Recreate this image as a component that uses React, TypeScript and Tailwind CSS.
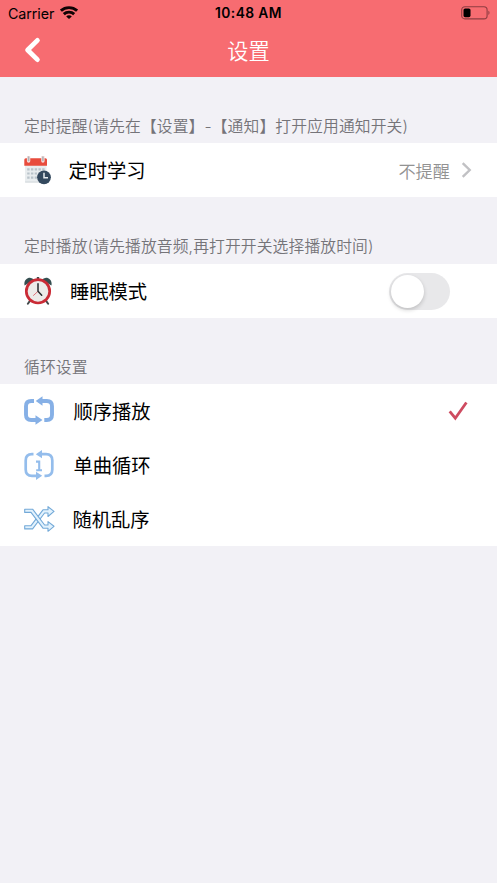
import type { ReactNode } from "react";

const font = "font-['Inter','Noto_Sans_CJK_SC',sans-serif]";

function StatusBar() {
  return (
    <div className="h-[25px] grid grid-cols-3 items-center text-black">
      <div className="flex items-center gap-[6px] pl-[8px]">
        <span className="text-[14.3px] leading-[25px] tracking-[-0.1px]">Carrier</span>
        <svg className="w-[18px] h-[13px] -mt-[2px]" viewBox="0 0 18 13" fill="none" stroke="#100304" strokeWidth="2.9">
          <path d="M.9 4.7C5.4.6 12.6.6 17.1 4.7" />
          <path d="M3.8 8.1C6.7 5.4 11.3 5.4 14.2 8.1" />
          <path d="M9 13 6.2 10.4C7.8 9 10.2 9 11.8 10.4Z" fill="#100304" stroke="none" />
        </svg>
      </div>
      <span className="text-center text-[13.8px] leading-[25px] pt-px font-semibold tracking-[0.4px] whitespace-nowrap">10:48 AM</span>
      <div className="flex justify-end pr-[7px]">
        <svg className="w-[29px] h-[14px]" viewBox="0 0 29 14">
          <rect x=".7" y=".7" width="25.4" height="12.2" rx="3.2" fill="none" stroke="#8f3d42" strokeWidth="1.1" />
          <rect x="2.5" y="2.5" width="7" height="8.7" rx="1.6" fill="#000" />
          <path d="M27.4 4.7c1.5.6 1.5 3.6 0 4.2z" fill="#8f3d42" />
        </svg>
      </div>
    </div>
  );
}

function CalendarIcon() {
  return (
    <svg className="w-[28px] h-[30px] mt-px" viewBox="0 0 28 30">
      <path d="M1 9h21.5v17.5H2.5A1.5 1.5 0 0 1 1 25z" fill="#e9edef" />
      <path d="M.3 3.8A1.5 1.5 0 0 1 1.8 2.3h19.7A1.5 1.5 0 0 1 23 3.8v6H.3z" fill="#e84c3d" />
      <path d="M4.6 1v4M18.9 1v4" stroke="#f7dcda" strokeWidth="3.4" strokeLinecap="round" />
      <path d="M4.6 1v3.4M18.9 1v3.4" stroke="#aeb4b8" strokeWidth="1.6" strokeLinecap="round" />
      <path d="M3.2 13.4h17.5M3.2 17.5h17.5M3.2 21.6h12" stroke="#b9c3ca" strokeWidth="2.2" strokeDasharray="2.4 1.35" />
      <path d="M1 26h15" stroke="#d0d6da" />
      <circle cx="20" cy="21.3" r="6.9" fill="#34495e" />
      <path d="M20 16.8v5h4" fill="none" stroke="#e8edf0" strokeWidth="1.5" />
    </svg>
  );
}

function AlarmIcon() {
  return (
    <svg className="w-[28px] h-[28px]" viewBox="0 0 28 28">
      <path d="m6.5 23-2.6 3.7M21.5 23l2.6 3.7" stroke="#42494b" strokeWidth="2" strokeLinecap="round" />
      <path d="M.6 8.5C-.6 4.2 2.8.5 6.5.9c1.8.1 3 1 3.7 1.8zM27.4 8.5C28.6 4.2 25.2.5 21.5.9c-1.8.1-3 1-3.7 1.8z" fill="#344e50" />
      <path d="M14 .6v2.6" stroke="#42494b" strokeWidth="2.4" strokeLinecap="round" />
      <circle cx="14" cy="14.3" r="11.7" fill="#ecebe9" stroke="#ca2b36" strokeWidth="2.7" />
      <path d="m14 14.3-4.8 4.4" stroke="#e0737a" />
      <path d="M14 6.7v7.6l3.7 3.9" fill="none" stroke="#252b2e" strokeWidth="1.5" strokeLinecap="round" />
    </svg>
  );
}

function LoopIcon() {
  return (
    <svg className="w-[30px] h-[30px]" viewBox="0 0 30 30" fill="none" stroke="#86b0e6" strokeWidth="3.9">
      <path d="M10 5H7.2Q2 5 2 10.2V18.8Q2 24 7.2 24H13" />
      <path d="M17 5H22.8Q28 5 28 10.2V18.8Q28 24 22.8 24H20.3" />
      <path d="M11.7 5 18.5.2v9.6zM18.5 24l-7-4.8v9.6z" fill="#86b0e6" stroke="none" />
    </svg>
  );
}

function LoopOneIcon() {
  return (
    <svg className="w-[30px] h-[30px]" viewBox="0 0 30 30" fill="none" stroke="#94bdec" strokeWidth="2.7">
      <path d="M9.5 4.2H8Q1.7 4.2 1.7 10.5V19.5Q1.7 25.8 8 25.8H13" />
      <path d="M17 4.2H22Q28.3 4.2 28.3 10.5V19.5Q28.3 25.8 22 25.8H20.5" />
      <path d="M11.8 4.2 18 .1v8.2zM18.2 25.8 12 21.7v8.2z" fill="#94bdec" stroke="none" />
      <path d="M12 11.6H15.2V20.2M12.2 20.2H18" strokeWidth="2.1" />
    </svg>
  );
}

function ShuffleIcon() {
  return (
    <svg className="w-[31px] h-[26px]" viewBox="0 0 31 26" fill="#e2f2fd" stroke="#73a9d8" strokeWidth="1.1" strokeLinejoin="round">
      <path d="M.7 19.7V22.9H8.6L20.6 7H24v3.5l6-5.1L24 .7v3.1h-5L7 19.7z" />
      <path d="M.7 3.2V6.4H7l12 15.8h5v3.1l6-5L24 15.6V19h-3.4L8.6 3.2z" />
    </svg>
  );
}

function SectionTitle({ children }: { children: ReactNode }) {
  return (
    <h2 className="pl-[24px] pt-[38px] h-full text-[15.8px] leading-[24px] tracking-[0.1px] font-[350] text-[#757479] whitespace-nowrap">
      {children}
    </h2>
  );
}

type RowProps = { icon: ReactNode; label: string; labelClass: string; children?: ReactNode };

function Row({ icon, label, labelClass, children }: RowProps) {
  return (
    <div className="h-[54px] bg-white flex items-center pl-[24px]">
      <div className="w-[31px] shrink-0 flex items-center">{icon}</div>
      <span className={`text-[19.3px] leading-[28px] pt-[2px] text-black ${labelClass}`}>{label}</span>
      {children}
    </div>
  );
}

export default function App() {
  return (
    <div className={`w-full min-h-[883px] bg-[#f2f1f6] ${font}`}>
      <header className="h-[77px] bg-[#f76c71]">
        <StatusBar />
        <div className="h-[50px] grid grid-cols-3 items-center">
          <button className="pl-[24px]" aria-label="返回">
            <svg className="w-[17px] h-[26px]" viewBox="0 0 17 26" fill="none" stroke="#fff" strokeWidth="4.8" strokeLinecap="round" strokeLinejoin="round">
              <path d="M13.4 3.4 3.6 13l9.8 9.6" />
            </svg>
          </button>
          <h1 className="pt-px text-center text-[21.2px] leading-[32px] font-[350] text-white">设置</h1>
        </div>
      </header>

      <section>
        <div className="h-[66px]">
          <SectionTitle>定时提醒(请先在【设置】-【通知】打开应用通知开关)</SectionTitle>
        </div>
        <Row icon={<CalendarIcon />} label="定时学习" labelClass="ml-[13.5px]">
          <span className="ml-auto pt-[3px] text-[17.2px] leading-[26px] font-[350] text-[#929292]">不提醒</span>
          <svg className="ml-[11px] mr-[25px] w-[11px] h-[16px]" viewBox="0 0 11 16" fill="none" stroke="#c1c1c4" strokeWidth="2.4">
            <path d="m1.7 1.2 7 6.8-7 6.8" />
          </svg>
        </Row>
      </section>

      <section>
        <div className="h-[67px]">
          <SectionTitle>定时播放(请先播放音频,再打开开关选择播放时间)</SectionTitle>
        </div>
        <Row icon={<AlarmIcon />} label="睡眠模式" labelClass="ml-[15px]">
          <button role="switch" aria-checked="false" className="ml-auto mr-[47px] mt-px w-[61px] h-[37px] rounded-full bg-[#e8e8ea] p-[2px]">
            <span className="block size-[33px] rounded-full bg-white shadow-[0_2px_4px_rgba(0,0,0,0.18)]" />
          </button>
        </Row>
      </section>

      <section>
        <div className="h-[66px]">
          <SectionTitle>循环设置</SectionTitle>
        </div>
        <Row icon={<LoopIcon />} label="顺序播放" labelClass="ml-[18.5px]">
          <svg className="ml-auto mr-[29px] w-[20px] h-[20px]" viewBox="0 0 20 20" fill="none" stroke="#ce4b60" strokeWidth="2.8">
            <path d="M1.7 10.4 7.3 17.2 18.4 1.5" />
          </svg>
        </Row>
        <Row icon={<LoopOneIcon />} label="单曲循环" labelClass="ml-[18.5px]" />
        <Row icon={<ShuffleIcon />} label="随机乱序" labelClass="ml-[17.5px]" />
      </section>
    </div>
  );
}
